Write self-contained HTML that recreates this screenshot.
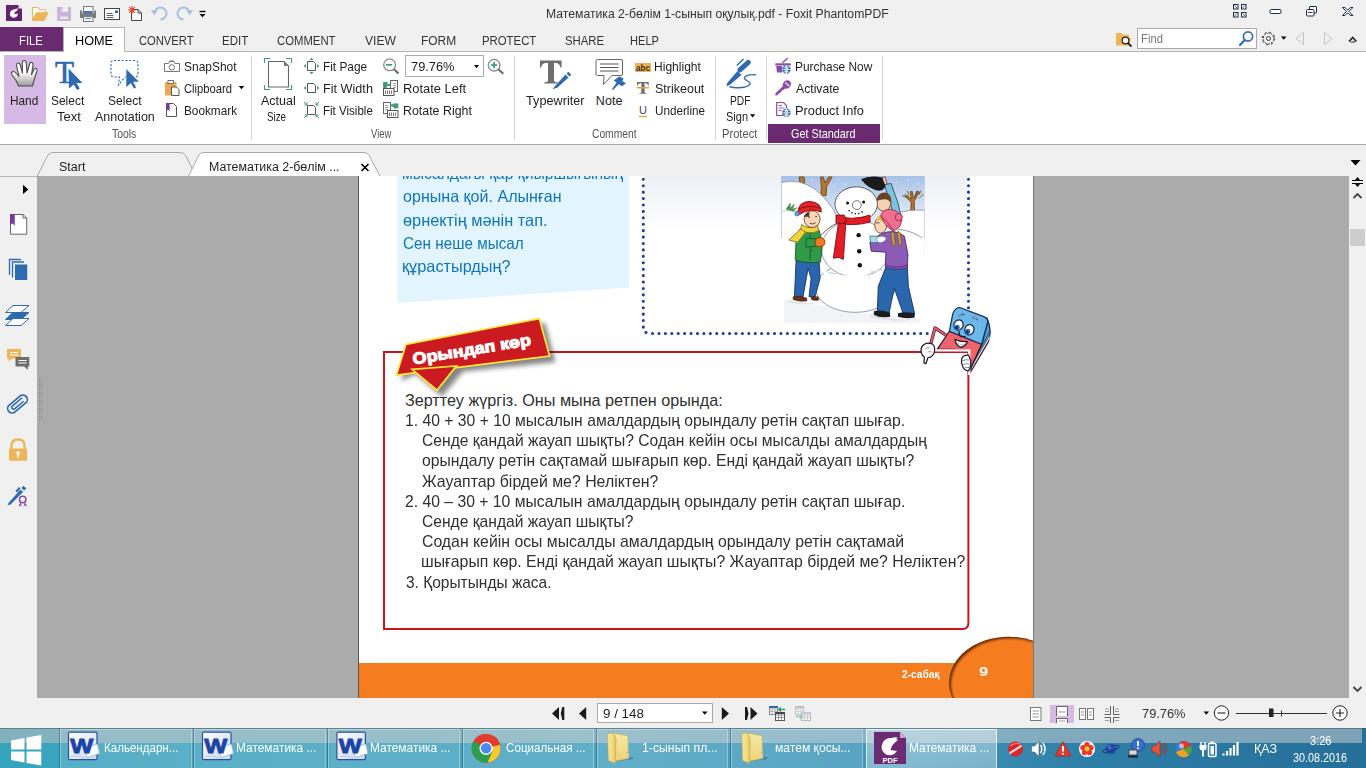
<!DOCTYPE html>
<html lang="kk"><head><meta charset="utf-8"><title>Foxit PhantomPDF</title>
<style>
html,body{margin:0;padding:0;}
body{width:1366px;height:768px;overflow:hidden;position:relative;background:#f0f0f0;font-family:"Liberation Sans",sans-serif;}
.a{position:absolute;}
.t{position:absolute;white-space:pre;line-height:1;transform-origin:0 0;font-family:"Liberation Sans",sans-serif;}
svg{position:absolute;overflow:visible;}
.sep{position:absolute;width:1px;background:#d4d4d4;top:56px;height:84px;}
</style></head><body>
<!-- title + tab bar backgrounds -->
<div class="a" style="left:0;top:0;width:1366px;height:52px;background:#f0f0f0"></div>
<div class="a" style="left:0;top:27px;width:63px;height:24px;background:#6a2a70"></div>
<div class="a" style="left:0;top:51px;width:1366px;height:1px;background:#b4b4b4"></div>
<div class="a" style="left:63px;top:27px;width:62px;height:25px;background:#fff;border:1px solid #b4b4b4;border-bottom:none;box-sizing:border-box"></div>
<!-- ribbon body -->
<div class="a" style="left:0;top:52px;width:1366px;height:92px;background:#fff"></div>
<div class="a" style="left:0;top:144px;width:1366px;height:1px;background:#ababab"></div>
<div class="a" style="left:4px;top:55px;width:42px;height:69px;background:#d6b9e4"></div>
<div class="sep" style="left:251px"></div><div class="sep" style="left:514px"></div><div class="sep" style="left:715px"></div><div class="sep" style="left:766px"></div><div class="sep" style="left:882px"></div>
<div class="a" style="left:768px;top:124px;width:112px;height:19px;background:#6a2a70"></div>
<div class="a" style="left:405px;top:55px;width:79px;height:22px;background:#fff;border:1px solid #ababab;box-sizing:border-box"></div>
<div class="a" style="left:1137px;top:28px;width:120px;height:21px;background:#fff;border:1px solid #ababab;box-sizing:border-box"></div>
<svg style="left:0;top:0" width="1366" height="52" viewBox="0 0 1366 52">
 <!-- foxit logo -->
 <path d="M6 5 H18.500 L22 8.500 V21 H6 Z" fill="#66226c"/><path d="M18.500 5 L22 8.500 H18.500 Z" fill="#f0f0f0"/>
 <path d="M18 9.800 Q13.500 8 10.800 11 Q8.600 14.500 11.300 17 Q14.800 19 17.300 16 Q18 14.800 17.800 13.600 L14 14.200 Q14.600 11.800 18 9.800 Z" fill="#fff"/><path d="M14.500 9.300 q2.500 -1.300 4 -0.600 q-1.800 0.600 -2.300 1.800 z" fill="#fff"/>
 <!-- open folder -->
 <path d="M32.500 20.500 V7.500 H38 L39.500 9.800 H45.500 V13.200" fill="#fff" stroke="#eeb45a" stroke-width="1.100"/>
 <path d="M32.500 20.500 L36.300 12.800 H48 L44.300 20.500 Z" fill="#eeb45a" stroke="#eeb45a" stroke-width="1"/>
 <!-- save (disabled, light purple) -->
 <rect x="57.100" y="7" width="13.900" height="13.900" fill="#cbb3d8"/>
 <rect x="61" y="7" width="7.100" height="4.800" fill="#f0f0f0"/><rect x="61.400" y="7" width="1.400" height="3.400" fill="#cbb3d8"/><rect x="60.200" y="16.700" width="7.900" height="2.200" fill="#f0f0f0"/>
 <!-- print -->
 <rect x="83.500" y="6.500" width="9.500" height="7" fill="#fff" stroke="#7b7b7b" stroke-width="1"/>
 <rect x="84" y="11" width="8.500" height="2.200" fill="#3b78c4"/>
 <path d="M80 10.400 H82.200 V13.200 H94.200 V10.400 H96 V18 H80 Z" fill="#7b7b7b"/>
 <rect x="83.500" y="16.700" width="9.500" height="4.800" fill="#fff" stroke="#7b7b7b" stroke-width="1"/>
 <path d="M85.300 18.600 h5.700" stroke="#3b78c4" stroke-width="0.900"/>
 <!-- email -->
 <rect x="104.500" y="8.500" width="15" height="11" fill="#fff" stroke="#444" stroke-width="1"/>
 <path d="M106.500 13.500 h6 M106.500 15.500 h7 M106.500 17.500 h7" stroke="#666" stroke-width="1"/><rect x="115" y="10.500" width="3" height="2.500" fill="#2a62b0"/>
 <!-- new doc w/ star -->
 <path d="M131.500 9.500 H138 L141.500 13 V20.500 H131.500 Z" fill="#fff" stroke="#444" stroke-width="1"/><path d="M138 9.500 V13 H141.500" fill="none" stroke="#444" stroke-width="1"/>
 <path d="M132 6 v8 M128 10 h8 M129.200 7.200 l5.600 5.600 M134.800 7.200 l-5.600 5.600" stroke="#e0452a" stroke-width="1.200"/>
 <!-- undo / redo -->
 <path d="M154.500 12.500 A6 6 0 1 1 160.500 19.500" fill="none" stroke="#a8c0e2" stroke-width="2"/><path d="M151 10.300 h6.800 l-3.600 5 z" fill="#a8c0e2"/>
 <path d="M189.500 12.500 A6 6 0 1 0 183.500 19.500" fill="none" stroke="#a8c0e2" stroke-width="2"/><path d="M186.200 10.300 h6.800 l-3.200 5 z" fill="#a8c0e2"/>
 <!-- qat dropdown -->
 <path d="M199.500 11.500 h6" stroke="#000" stroke-width="1.400"/><path d="M199.500 14 h6 l-3 3.300 z" fill="#000"/>
 <!-- window controls -->
 <g stroke="#1e2a4a" stroke-width="1" fill="#fff">
  <rect x="1233.500" y="4.500" width="4.500" height="4.500"/><rect x="1241.500" y="4.500" width="4.500" height="4.500"/><rect x="1233.500" y="12.500" width="4.500" height="4.500"/><rect x="1241.500" y="12.500" width="4.500" height="4.500"/>
  <path d="M1234.500 5.500 l2.500 2.500 M1245 5.500 l-2.500 2.500 M1234.500 16 l2.500 -2.500 M1245 16 l-2.500 -2.500" stroke-width="0.800" fill="none"/>
  <rect x="1270" y="9.500" width="11" height="4" rx="1.200"/>
  <path d="M1309.500 9.500 V7 Q1309.500 6.500 1310 6.500 H1316 Q1316.500 6.500 1316.500 7 V12.500 Q1316.500 13 1316 13 H1314"/><rect x="1306.500" y="9.500" width="7.500" height="6.500" rx="1"/><path d="M1308 12.500 h4.500" stroke-width="0.900" fill="none"/>
  <path d="M1342.500 7.500 h2.500 l2.700 2.700 l2.700 -2.700 h2.500 l-3.900 4 l3.900 4 h-2.500 l-2.700 -2.700 l-2.700 2.700 h-2.500 l3.900 -4 z"/>
 </g>
 <!-- find row -->
 <path d="M1116 45.500 V33 H1121.500 L1123 34.800 H1129 V38" fill="#f1b555"/><path d="M1116 45.500 L1118 38 H1131 L1129 45.500 Z" fill="#f1b555"/>
 <circle cx="1125.500" cy="40.500" r="3.400" fill="#fff" stroke="#222" stroke-width="1.300"/><path d="M1128 43 l3.500 3.500" stroke="#222" stroke-width="1.800"/>
 <circle cx="1248" cy="36.500" r="4.600" fill="#fff" stroke="#2e6cc0" stroke-width="1.700"/><path d="M1244.800 40 l-4.800 5" stroke="#2e6cc0" stroke-width="2.200" stroke-linecap="round"/>
 <g stroke="#333" fill="none">
  <circle cx="1268.500" cy="38.500" r="5.300" stroke-width="1" stroke-dasharray="2.100 1.230"/><circle cx="1268.500" cy="38.500" r="6.300" stroke-width="1" stroke-dasharray="2.100 2.850" stroke-dashoffset="0"/><circle cx="1268.500" cy="38.500" r="2" stroke-width="1"/>
 </g>
 <path d="M1281 36.500 h5.500 l-2.750 3.200 z" fill="#000"/>
 <path d="M1303.500 32.500 V44.500 L1296 38.500 Z" fill="none" stroke="#c4c4c4" stroke-width="1"/>
 <path d="M1324.500 32.500 V44.500 L1332 38.500 Z" fill="none" stroke="#c4c4c4" stroke-width="1"/>
 <path d="M1349 41.500 l3.700 -4 l3.700 4" fill="none" stroke="#222" stroke-width="1.600"/><path d="M1350.500 42 h4.500" stroke="#222" stroke-width="1"/>
</svg>

<svg style="left:0;top:52px" width="1366" height="92" viewBox="0 52 1366 92">
<defs>
 <linearGradient id="ghand" x1="0" y1="0" x2="0" y2="1"><stop offset="0.45" stop-color="#fff"/><stop offset="1" stop-color="#9a9a9a"/></linearGradient>
</defs>
<!-- hand -->
<path d="M18.500 86 Q17 81 13.500 77 Q10.500 73.500 12 72 Q14 70.500 17 74 L19 76.500 L16.500 65.500 Q16.300 63.300 18 63 Q19.700 62.800 20.300 65 L22.500 73 L22.300 62.500 Q22.500 60.500 24.200 60.500 Q26 60.500 26.200 62.500 L27 73 L29.500 64 Q30.200 62 31.800 62.500 Q33.300 63 33 65.200 L31.500 74.500 L34 69.500 Q35 67.800 36.300 68.500 Q37.500 69.200 36.800 71.500 Q34.500 78 32.500 86 Z" fill="url(#ghand)" stroke="#4a4a4a" stroke-width="1.100" stroke-linejoin="round"/>
<!-- select text -->
<text x="55" y="83" font-family="Liberation Serif, serif" font-size="31" fill="#2d6ab0" stroke="#2d6ab0" stroke-width="0.600" textLength="19" lengthAdjust="spacingAndGlyphs">T</text>
<path d="M68.500 68.500 L82.500 83 L76.500 83 L79.800 88.500 L77 90 L73.800 84.500 L69 88.500 Z" fill="#2d6ab0"/>
<!-- select annotation -->
<path d="M114 60.500 H135 Q138 60.500 138 63.500 V74 Q138 77 135 77 H125 L118.500 85 L119.500 77 H114 Q111 77 111 74 V63.500 Q111 60.500 114 60.500 Z" fill="none" stroke="#2d6ab0" stroke-width="1.100" stroke-dasharray="2.200 1.600"/>
<path d="M126 68.500 L139.500 82 L133.500 82 L136.500 87.500 L133.800 89 L130.800 83.500 L126 87.500 Z" fill="#2d6ab0" stroke="#fff" stroke-width="0.600"/>
<!-- camera -->
<path d="M164.500 63.500 H168.500 L169.500 61.500 H174 L175 63.500 H179.500 V71.500 H164.500 Z" fill="#fff" stroke="#777" stroke-width="1"/><rect x="169.500" y="60.500" width="4.500" height="1.500" fill="#777"/>
<circle cx="171.800" cy="67.300" r="2.700" fill="#fff" stroke="#777" stroke-width="1"/>
<!-- clipboard -->
<path d="M165 82 H176.500 V88 H171.500 V95.500 H165 Z" fill="#eaa94e"/>
<rect x="168" y="80.500" width="5.500" height="3" fill="#fff" stroke="#666" stroke-width="0.900"/>
<path d="M171.500 87 H176.500 L179 89.500 V95.500 H171.500 Z" fill="#fff" stroke="#555" stroke-width="1"/>
<path d="M238.700 86 h5.600 l-2.800 3.300 z" fill="#000"/>
<!-- bookmark -->
<path d="M166.500 103.500 H173.500 L176.500 106.500 V116.500 H166.500 Z" fill="#fff" stroke="#555" stroke-width="1"/>
<path d="M166.200 103 H169.600 V111.300 L167.900 109.500 L166.200 111.300 Z" fill="#7a3a9a"/>
<!-- actual size -->
<g stroke="#3d9a7a" stroke-width="1.100" fill="none"><path d="M264.500 63 V58.500 H270 M286 58.500 H291.500 V63 M291.500 85 V89.500 H286 M270 89.500 H264.500 V85"/></g>
<path d="M268.500 61.500 H284 L288.500 66 V87 H268.500 Z" fill="#fff" stroke="#666" stroke-width="1.100"/><path d="M284 61.500 V66 H288.500 Z" fill="#777"/>
<!-- fit page -->
<g>
 <path d="M307.500 61.500 H313.500 L315.500 63.500 V70.500 H307.500 Z" fill="#fff" stroke="#555" stroke-width="1"/>
 <path d="M309.500 60 l2 -2.200 l2 2.200 z M309.500 72 l2 2.200 l2 -2.200 z M306 64 l-2.200 2 l2.200 2 z M317 64 l2.200 2 l-2.200 2 z" fill="#3d9a7a"/>
 <path d="M307.500 83.500 H313.500 L315.500 85.500 V92.500 H307.500 Z" fill="#fff" stroke="#555" stroke-width="1"/>
 <path d="M306 86 l-2.200 2 l2.200 2 z M317 86 l2.200 2 l-2.200 2 z" fill="#3d9a7a"/>
 <path d="M307.500 105.500 H313.500 L315.500 107.500 V114.500 H307.500 Z" fill="#fff" stroke="#555" stroke-width="1"/>
 <path d="M304 102 l3 3 M319 102 l-3 3 M304 118 l3 -3 M319 118 l-3 -3" stroke="#3d9a7a" stroke-width="1"/>
 <path d="M307 105 h-2.500 M307 105 v-2.500 M316 105 h2.500 M316 105 v-2.500 M307 115 h-2.500 M307 115 v2.500 M316 115 h2.500 M316 115 v2.500" stroke="#3d9a7a" stroke-width="1"/>
</g>
<!-- zoom out / in -->
<circle cx="389.600" cy="64.800" r="5.900" fill="#fff" stroke="#8a8a8a" stroke-width="1.300"/><path d="M394 69.300 l4.500 4.300" stroke="#6a6a6a" stroke-width="2.100"/><path d="M386 64.800 h6.200" stroke="#3d9a7a" stroke-width="1.700"/>
<circle cx="494.100" cy="65.200" r="5.800" fill="#fff" stroke="#8a8a8a" stroke-width="1.300"/><path d="M498.500 69.500 l4.800 4.300" stroke="#6a6a6a" stroke-width="2.100"/><path d="M491 65.200 h6.200 M494.100 62.100 v6.200" stroke="#3d9a7a" stroke-width="1.700"/>
<path d="M474 65 h5 l-2.500 3.300 z" fill="#000"/>
<!-- rotate left / right -->
<g>
 <rect x="390.500" y="80.500" width="7" height="11" fill="#fff" stroke="#666" stroke-width="1"/><path d="M393 83.500 h3 M393 85.500 h3 M393 87.500 h3" stroke="#888" stroke-width="0.800"/>
 <rect x="383.500" y="88.500" width="10.500" height="7" fill="#fff" stroke="#555" stroke-width="1"/><path d="M385.500 90.500 v3.500 M387.500 90.500 v3.500 M389.500 90.500 v3.500 M391.500 90.500 v3.500" stroke="#666" stroke-width="0.900"/>
 <path d="M383.300 82 h3.500 v2 q3.500 -1.500 4.500 3.500 q-2 -2.500 -4.500 -1.500 v2 h-3.500 z" fill="#3d9a7a"/><path d="M383.300 82 h5 l-5 5.500 z" fill="#3d9a7a"/>
 <rect x="383.500" y="102.500" width="7" height="11" fill="#fff" stroke="#666" stroke-width="1"/><path d="M385 105.500 h3 M385 107.500 h3 M385 109.500 h3" stroke="#888" stroke-width="0.800"/>
 <rect x="387.500" y="110.500" width="10.500" height="7" fill="#fff" stroke="#555" stroke-width="1"/><path d="M389.500 112.500 v3.500 M391.500 112.500 v3.500 M393.500 112.500 v3.500 M395.500 112.500 v3.500" stroke="#666" stroke-width="0.900"/>
 <path d="M389.500 106 q2 -3 5 -1.500 v-1.500 l4 3.500 l-4 3 v-1.800 q-2.500 -1.700 -5 -1.700 z" fill="#3d9a7a"/><path d="M393.300 103.500 h5 v5.500 z" fill="#3d9a7a"/>
</g>
<!-- typewriter -->
<path d="M540 60.500 H561.600 V67.500 H560.400 Q559.800 63 555.500 63 H554 V80.500 Q554 82.300 557.500 82.300 V83.500 H544.400 V82.300 Q548 82.300 548 80.500 V63 H546.200 Q541.800 63 541.200 67.500 H540 Z" fill="#6e6e6e"/>
<path d="M555.500 85.500 L565.500 74.500 L568.500 77.500 L557.500 87.500 L552.500 89.300 Z" fill="#2d6ab0"/><path d="M566.500 73.500 l1.800 -1.800 l3 3 l-1.800 1.800 z" fill="#2d6ab0"/>
<!-- note -->
<path d="M597.500 59.500 H621 Q622.500 59.500 622.500 61 V74 Q622.500 75.500 621 75.500 H612 L603.500 84.500 L604 75.500 H597.500 Q596 75.500 596 74 V61 Q596 59.500 597.500 59.500 Z" fill="#fff" stroke="#666" stroke-width="1"/>
<path d="M600 64 h18.500 M600 67.500 h18.500 M600 71 h18.500" stroke="#555" stroke-width="1"/>
<path d="M619.300 76.400 L623.600 78.600 L622.300 81 L626 83.300 L622 86.200 L618.700 84.300 L613.300 89.800 L611.800 89.600 L616.600 82.600 L613.600 80.400 Z" fill="#2d6ab0"/>
<!-- highlight / strikeout / underline -->
<rect x="635" y="63" width="16" height="9" fill="#f0b44c"/>
<text x="636" y="70.500" font-family="Liberation Sans, sans-serif" font-weight="700" font-size="9.500" fill="#333" textLength="14" lengthAdjust="spacingAndGlyphs">abc</text>
<path transform="translate(637 82) scale(0.542 0.509) translate(-540 -60.500)" d="M540 60.500 H561.600 V67.500 H560.400 Q559.800 63 555.500 63 H554 V80.500 Q554 82.300 557.500 82.300 V83.500 H544.400 V82.300 Q548 82.300 548 80.500 V63 H546.200 Q541.800 63 541.200 67.500 H540 Z" fill="#6e6e6e"/><path d="M636.500 87.700 h12.500" stroke="#e8a23c" stroke-width="1.500"/>
<text x="639" y="113.500" font-family="Liberation Sans, sans-serif" font-size="11" fill="#444">U</text><path d="M639 116.500 h8" stroke="#e8a23c" stroke-width="1.400"/>
<!-- pdf sign -->
<path d="M739.900 69.900 L748.300 62.400" stroke="#2d6ab0" stroke-width="5" stroke-linecap="round" fill="none"/>
<path d="M737.500 71 L741.500 75 L730 84.700 L726.400 86.200 L727.200 83 Z" fill="#2d6ab0"/>
<path d="M736.800 65.500 L743.500 58.900" stroke="#2d6ab0" stroke-width="1.400" fill="none"/>
<path d="M755.800 74.800 C748 74 744 76.500 744.500 78.500 C745.500 81 751 81.500 750 84 C748 88 736 88.500 729.500 86.800" fill="none" stroke="#2d6ab0" stroke-width="1.400"/>
<path d="M750 114.300 h5.200 l-2.600 3.100 z" fill="#000"/>
<!-- purchase / activate / product info -->
<g>
 <path d="M775.300 63.300 H790.800 V65.500 H775.300 Z" fill="#8a4aa8"/><path d="M776.200 66 H782 V72.600 H777 Z" fill="#8a4aa8"/>
 <path d="M782.400 62.800 L787.700 58" stroke="#8a4aa8" stroke-width="1.400"/>
 <circle cx="786.400" cy="69.500" r="4.300" fill="#2d6ab0"/><path d="M782.100 69.500 h8.600 M786.400 65.200 v8.600 M783.300 66.800 q3.100 1.400 6.200 0 M783.300 72.200 q3.100 -1.400 6.200 0 M786.400 65.200 q-3 4.300 0 8.600 M786.400 65.200 q3 4.300 0 8.600" stroke="#fff" stroke-width="0.700" fill="none"/>
 <path d="M775.300 95.500 L775.500 93.200 L782.800 86.300 Q782.300 83.500 784.500 81.300 Q787.500 79.200 790 81.300 Q792 83.800 790 86.800 Q788 89.300 785 88.600 L783.600 90 L782.400 89.800 L782 91.600 L780.600 91.600 L780.300 93.200 L778.800 93.200 L777.500 95.300 Z" fill="#8a4aa8"/><path d="M785.300 82.500 l4 3.600" stroke="#fff" stroke-width="1.200"/>
 <path d="M776.700 102.500 H783.500 L786.500 105.500 V115.500 H776.700 Z" fill="#fff" stroke="#8a4aa8" stroke-width="1.200"/><path d="M778.700 105.500 h3.500 M778.700 108 h5 M778.700 110.500 h3" stroke="#8a4aa8" stroke-width="0.900"/>
 <circle cx="786.400" cy="112.800" r="4.300" fill="#2d6ab0"/><path d="M782.100 112.800 h8.600 M786.400 108.500 v8.600 M783.300 110.100 q3.100 1.400 6.200 0 M783.300 115.500 q3.100 -1.400 6.200 0 M786.400 108.500 q-3 4.300 0 8.600 M786.400 108.500 q3 4.300 0 8.600" stroke="#fff" stroke-width="0.700" fill="none"/>
</g>
</svg>

<!-- doc tab strip -->
<svg style="left:0;top:145px" width="1366" height="32" viewBox="0 145 1366 32">
 <path d="M37 176.5 L48 155 Q50 152.5 53 152.5 L180 152.5 Q184 152.5 186 156 L193 170" fill="#f0f0f0" stroke="#a8a8a8" stroke-width="1"/>
 <path d="M188 177 L199 155 Q200.500 152.500 203.500 152.500 L364 152.500 Q367.500 152.500 369 155.500 L380.500 177 Z" fill="#fff" stroke="#a8a8a8" stroke-width="1"/>
 <path d="M361.500 164 l7 7 m0 -7 l-7 7" stroke="#000" stroke-width="1.6" fill="none"/>
 <path d="M1350.5 160 h10 l-5 5.5 z" fill="#000"/>
</svg>
<!-- document viewport -->
<div class="a" style="left:37px;top:176px;width:1312px;height:522px;background:#ababab"></div>
<div class="a" style="left:0;top:176px;width:37px;height:1px;background:#b8b8b8"></div>
<div class="a" style="left:0;top:176px;width:1366px;height:522px;overflow:hidden"><div class="a" style="left:0;top:-176px;width:1366px;height:768px">
<div class="a" style="left:358px;top:170px;width:676px;height:540px;background:#fff;border-left:1px solid #555;border-right:1px solid #777;box-sizing:border-box"></div>
<svg style="left:0;top:0" width="1366" height="768" viewBox="0 0 1366 768">
<defs>
 <linearGradient id="gsky" x1="0" y1="0" x2="0" y2="1"><stop offset="0" stop-color="#a4c0e6"/><stop offset="0.6" stop-color="#dfe9f7"/><stop offset="1" stop-color="#f4f7fc"/></linearGradient>
 <linearGradient id="gbox" x1="0" y1="0" x2="0" y2="1"><stop offset="0" stop-color="#eceef5"/><stop offset="1" stop-color="#ffffff"/></linearGradient>
 <radialGradient id="gor" cx="0.62" cy="0.55" r="0.75"><stop offset="0.75" stop-color="#f57d20"/><stop offset="1" stop-color="#c25e14"/></radialGradient>
 <filter id="sh" x="-20%" y="-20%" width="150%" height="160%"><feGaussianBlur stdDeviation="2.600"/></filter>
 <filter id="sh1" x="-20%" y="-20%" width="150%" height="160%"><feGaussianBlur stdDeviation="1.2"/></filter>
 <clipPath id="corc"><ellipse cx="1008.600" cy="683" rx="59.600" ry="46.300"/></clipPath>
 <clipPath id="cpic"><rect x="781" y="170" width="143.800" height="153.400"/></clipPath>
</defs>
<!-- light blue box -->
<path d="M397.300 170 H629.300 V287.600 L397.300 303 Z" fill="#e2f4fd"/>
<!-- dotted frame w/ gradient -->
<rect x="645" y="170" width="322" height="60" fill="url(#gbox)"/>
<path d="M643.300 172.880 V326.500 Q643.300 333.500 650.300 333.500 H807" fill="none" stroke="#1f3f97" stroke-width="3.100" stroke-linecap="round" stroke-dasharray="0.010 6.410"/><path d="M968.500 172.880 V326.500 Q968.500 333.500 961.500 333.500 H810" fill="none" stroke="#1f3f97" stroke-width="3.100" stroke-linecap="round" stroke-dasharray="0.010 6.410"/>
<!-- picture -->
<g clip-path="url(#cpic)"><g transform="translate(776 174) scale(0.20052)">
 <rect x="25" y="0" width="718" height="745" fill="#fff"/>
 <rect x="25" y="0" width="718" height="330" fill="url(#gsky)"/>
 <!-- trees -->
 <path d="M115 15 h25 l3 32 h-22 z" fill="#b5772d" stroke="#6a4418" stroke-width="4.500"/>
 <path d="M222 15 l14 0 l8 30 l18 -30 l18 0 l-28 48 l-2 45 h-26 l2 -50 z" fill="#b5772d" stroke="#6a4418" stroke-width="4.500"/>
 <path d="M672 188 l2 -48 l-30 -28 l8 -6 l22 20 l-4 -38 l9 -1 l6 34 l22 -36 l8 5 l-26 46 l2 52 z" fill="#b5772d" stroke="#6a4418" stroke-width="4.500"/>
 <path d="M640 100 l14 14 M700 84 l-4 26 M735 100 l-22 22 M655 84 l8 22 M722 84 l-8 20 M628 108 l18 6" stroke="#6a4418" stroke-width="4" fill="none"/>
 <!-- snow dots -->
 <g fill="#fff"><circle cx="180" cy="30" r="3"/><circle cx="310" cy="25" r="3"/><circle cx="345" cy="50" r="3"/><circle cx="600" cy="40" r="3"/><circle cx="660" cy="30" r="3"/><circle cx="710" cy="50" r="3"/><circle cx="630" cy="70" r="3"/><circle cx="290" cy="60" r="3"/></g>
 <!-- hills -->
 <path d="M25 42 Q120 20 200 80 Q260 130 300 200 L300 330 L25 330 Z" fill="#fff" stroke="#8a93a6" stroke-width="4.500"/>
 <path d="M25 190 Q60 175 110 185" fill="none" stroke="#c5cad6" stroke-width="4.500"/>
 <path d="M590 200 Q660 175 743 180 L743 340 L590 340 Z" fill="#fff" stroke="#8a93a6" stroke-width="4.500"/>
 <path d="M610 275 Q690 285 743 330 L743 400 L610 400 Z" fill="#fff" stroke="#8a93a6" stroke-width="4.500"/>
 <rect x="25" y="320" width="718" height="430" fill="#fff"/>
 <!-- ground shadow -->
 <path d="M40 625 Q120 645 230 655 Q400 705 520 695 Q640 725 720 720 L720 745 L40 745 Z" fill="#f3f4f7"/><path d="M60 630 Q130 650 215 640 Q150 660 60 640 Z M470 700 Q580 735 715 722 Q600 745 470 715 Z" fill="#dfe1e8"/>
 
 <!-- grass -->
 <path d="M50 175 l22 -30 l-2 26 l22 -22 l-10 28 l22 -10 l-18 20 z" fill="#4f9a48" stroke="#2a5a28" stroke-width="2"/>
 <!-- boy behind -->
 <path d="M540 52 l34 -4 l34 95 l20 90 l-34 10 l-22 -90 z" fill="#7ec3de" stroke="#2a4a60" stroke-width="4.500"/>
 <path d="M528 18 l16 -4 l10 36 l-20 6 z" fill="#f6d2b4" stroke="#6b4a32" stroke-width="4.500"/>
 <ellipse cx="537" cy="142" rx="36" ry="44" fill="#f6d2b4" stroke="#6b4a32" stroke-width="4.500"/>
 <path d="M502 135 Q505 90 545 92 Q580 98 575 150 Q560 110 502 135 Z" fill="#6b4226"/>
 <path d="M424 26 Q470 5 530 18 L546 58 Q540 80 516 84 Q460 76 424 26 Z" fill="#1a1a1a"/>
 <!-- snowman -->
 <ellipse cx="395" cy="568" rx="198" ry="122" fill="#fff" stroke="#8a93a6" stroke-width="4.500"/>
 <ellipse cx="398" cy="372" rx="172" ry="142" fill="#fff" stroke="#8a93a6" stroke-width="4.500"/>
 <path d="M240 480 Q300 520 380 500 Q470 520 550 470 Q560 520 520 560 Q400 600 270 560 Q230 520 240 480 Z" fill="#fff"/>
 <path d="M260 490 q30 10 55 5 M470 490 q30 -2 50 -14" stroke="#d5d9e2" stroke-width="8" fill="none"/>
 <ellipse cx="400" cy="150" rx="106" ry="86" fill="#fff" stroke="#4a4a55" stroke-width="4.500"/>
 <circle cx="403" cy="155" r="22" fill="#fff" stroke="#555" stroke-width="4"/>
 <circle cx="357" cy="145" r="7.500" fill="#111"/><circle cx="437" cy="140" r="7.500" fill="#111"/>
 <g fill="#111"><circle cx="365" cy="183" r="4"/><circle cx="379" cy="193" r="4"/><circle cx="396" cy="198" r="4"/><circle cx="413" cy="197" r="4"/><circle cx="429" cy="189" r="4"/></g>
 <circle cx="412" cy="305" r="11" fill="#111"/><circle cx="415" cy="385" r="11" fill="#111"/><circle cx="418" cy="455" r="11" fill="#111"/>
 <!-- scarf -->
 <path d="M300 208 Q380 235 468 205 L470 240 Q385 262 318 246 Z" fill="#e21d26" stroke="#7e0e14" stroke-width="4.500"/>
 <path d="M312 238 l36 10 l-12 178 l-22 -10 l-28 4 Z" fill="#e21d26" stroke="#7e0e14" stroke-width="4.500"/>
 <path d="M300 205 l40 0 l14 30 l-30 14 l-24 -6 z" fill="#e21d26" stroke="#7e0e14" stroke-width="4.500"/>
 <!-- arm stick -->
 <path d="M225 305 Q270 260 305 245" fill="none" stroke="#333" stroke-width="4"/>
 <!-- boy left -->
 <path d="M100 435 H215 L220 520 L195 612 H165 L175 520 L160 470 L135 612 H92 Z" fill="#2a66ad" stroke="#16335c" stroke-width="4.500"/>
 <path d="M85 612 q35 -8 68 6 l2 14 q-40 8 -70 -6 z M176 612 h34 l4 16 q-20 6 -38 -2 z" fill="#6a3018" stroke="#2a1408" stroke-width="2"/>
 <path d="M120 275 Q170 255 215 280 L232 350 L222 438 Q160 450 96 430 L100 330 Z" fill="#2f9a48" stroke="#17572a" stroke-width="4.500"/>
 <path d="M170 290 v140" stroke="#17572a" stroke-width="4.500"/><circle cx="180" cy="330" r="4" fill="#17572a"/><circle cx="180" cy="380" r="4" fill="#17572a"/>
 <path d="M150 320 L215 325 L215 360 L150 365 Z" fill="#2f9a48" stroke="#17572a" stroke-width="4.500"/>
 <path d="M200 322 q30 -12 42 8 q6 22 -10 30 q-22 8 -38 -4 z" fill="#f47b20" stroke="#8a3a08" stroke-width="4.500"/>
 <path d="M128 252 Q165 280 208 256 l4 28 Q165 305 122 280 Z" fill="#f2d53c" stroke="#8a7418" stroke-width="4.500"/>
 <path d="M122 275 l26 14 l-40 52 l-44 -12 z" fill="#f2d53c" stroke="#8a7418" stroke-width="4.500"/>
 <ellipse cx="180" cy="225" rx="40" ry="42" fill="#f8d6b8" stroke="#6b4a32" stroke-width="4.500"/>
 <path d="M138 215 q10 -20 30 -25 l-4 22 z" fill="#5a3218"/>
 <path d="M108 195 Q112 135 170 137 Q228 142 226 190 Q170 165 112 205 Z" fill="#e3232a" stroke="#7e0e14" stroke-width="4.500"/>
 <path d="M112 175 Q165 150 225 172" fill="none" stroke="#7e0e14" stroke-width="4.500"/>
 <circle cx="105" cy="198" r="12" fill="#5aa0d8" stroke="#1f4a80" stroke-width="2"/>
 <circle cx="165" cy="215" r="4" fill="#222"/><circle cx="200" cy="212" r="4" fill="#222"/><path d="M168 245 q16 10 30 -2" stroke="#6b2a18" stroke-width="4.500" fill="none"/>
 <!-- girl -->
 <path d="M548 465 H655 L660 560 L692 700 L640 712 L590 570 L575 640 L560 712 L505 700 L510 560 Z" fill="#2a66ad" stroke="#16335c" stroke-width="4.500"/>
 <path d="M488 684 q40 -8 80 8 l2 20 q-50 8 -82 -10 z M608 694 q40 -10 82 0 l2 22 q-46 8 -84 -4 z" fill="#1c1c1c"/>
 <path d="M520 300 Q590 270 640 310 L658 400 L655 468 Q600 485 545 465 L548 390 L475 385 L468 340 Z" fill="#8b5bb5" stroke="#4a2a70" stroke-width="4.500"/>
 <path d="M548 455 Q600 475 655 455" stroke="#4a2a70" stroke-width="4.500" fill="none"/>
 <path d="M468 310 h50 l-4 32 h-42 z" fill="#a8dcea" stroke="#3a7a90" stroke-width="4.500"/>
 <path d="M500 320 q30 -20 50 0 q-8 24 -40 22 z" fill="#fff" stroke="#555" stroke-width="2"/>
 <ellipse cx="522" cy="255" rx="30" ry="40" fill="#f8d6b8" stroke="#6b4a32" stroke-width="4.500"/>
 <path d="M500 225 q15 -30 45 -25 l-10 40 z" fill="#e0c050"/>
 <path d="M572 292 q10 -5 17 2 l6 60 l-13 6 z M604 290 q9 -4 16 3 l7 58 l-13 5 z" fill="#c9a040" stroke="#6a4a14" stroke-width="3"/>
 <path d="M522 210 Q530 170 580 178 Q630 190 625 240 Q618 278 580 282 Q545 262 522 210 Z" fill="#ef6f8e" stroke="#9a2a48" stroke-width="4.500"/>
 <path d="M524 212 Q560 240 585 282" stroke="#9a2a48" stroke-width="4.500" fill="none"/>
 <circle cx="612" cy="215" r="18" fill="#ef6f8e" stroke="#9a2a48" stroke-width="4.500"/>
 <path d="M500 245 q8 -6 16 0" stroke="#4a2a18" stroke-width="4.500" fill="none"/>
</g></g>
<!-- red box -->
<path d="M384 352 H968.400 V623 Q968.400 629 962.400 629 H384 Z" fill="none" stroke="#c8141c" stroke-width="2"/>
<!-- eraser mascot -->
<rect x="937.500" y="330" width="26" height="7" fill="#fff"/>
<g transform="translate(915 300) scale(0.104167)">
 <!-- side stripes -->
 <path d="M690 172 Q718 230 722 300 Q722 360 700 410 L528 700 L518 688 L640 425 L700 200 Z" fill="#4a9ad8" stroke="#1b2a4a" stroke-width="12" stroke-linejoin="round"/>
 <path d="M712 380 L528 700 L518 688 L655 440 Z" fill="#e8505a"/>
 <path d="M716 340 L540 640 L548 655 L718 365 Z" fill="#f6ecd0"/>
 <path d="M720 300 L560 585 M716 340 L545 635 M712 385 L530 695" stroke="#1b2a4a" stroke-width="6" fill="none"/>
 <!-- pink lower -->
 <path d="M330 300 L640 425 L560 600 L520 690 L520 478 L215 472 Z" fill="#f0636d" stroke="#1b1b2a" stroke-width="12" stroke-linejoin="round"/>
 <!-- blue face -->
 <path d="M330 300 L362 135 Q380 75 430 72 L672 165 Q700 180 698 210 L640 425 Z" fill="#6bb9ea" stroke="#1b2a4a" stroke-width="12" stroke-linejoin="round"/>
 <!-- eyebrows -->
 <path d="M418 150 Q440 118 475 140 Q445 135 425 158 Z" fill="#fff" stroke="#1b2a4a" stroke-width="6"/>
 <path d="M556 165 Q590 150 602 195 Q585 172 560 178 Z" fill="#fff" stroke="#1b2a4a" stroke-width="6"/>
 <!-- eyes -->
 <ellipse cx="418" cy="240" rx="44" ry="50" fill="#fff" stroke="#1b2a4a" stroke-width="12" transform="rotate(20 418 240)"/>
 <ellipse cx="522" cy="285" rx="44" ry="50" fill="#fff" stroke="#1b2a4a" stroke-width="12" transform="rotate(20 522 285)"/>
 <circle cx="404" cy="262" r="25" fill="#2a6ab8"/><circle cx="399" cy="267" r="13" fill="#0e2a58"/>
 <circle cx="506" cy="302" r="25" fill="#2a6ab8"/><circle cx="501" cy="307" r="13" fill="#0e2a58"/>
 <path d="M422 305 Q418 360 480 350" fill="none" stroke="#16223c" stroke-width="14" stroke-linecap="round"/>
 <!-- mouth -->
 <path d="M383 378 Q440 405 502 398 Q495 440 440 455 Q395 440 383 378 Z" fill="#fff" stroke="#1b1b2a" stroke-width="12" stroke-linejoin="round"/>
 <path d="M398 415 Q440 432 490 425" fill="none" stroke="#444" stroke-width="3"/>
 <!-- left arm -->
 <path d="M300 340 L192 268 L150 425" fill="none" stroke="#1b1b2a" stroke-width="30" stroke-linejoin="round"/>
 <path d="M300 340 L192 268 L150 425" fill="none" stroke="#ea5660" stroke-width="19" stroke-linejoin="round"/>
 <!-- white outline for the box corner -->
 <path d="M180 484 H521 V720" fill="none" stroke="#fff" stroke-width="22"/>
 <!-- hands -->
 <path d="M62 455 Q95 400 155 418 Q195 435 188 485 Q182 530 150 548 L125 552 L104 612 L86 604 L90 548 Q45 515 62 455 Z" fill="#fff" stroke="#1b1b2a" stroke-width="12" stroke-linejoin="round"/>
 <path d="M100 470 q20 -20 40 -10 M120 500 q20 -10 40 0" stroke="#555" stroke-width="6" fill="none"/>
 <path d="M450 560 Q465 525 515 530 L535 580 Q540 640 515 680 Q470 680 455 630 Q440 590 450 560 Z" fill="#fff" stroke="#1b1b2a" stroke-width="12" stroke-linejoin="round"/>
 <path d="M455 585 q30 -20 65 -8 M460 620 q30 -16 62 -4 M475 652 q22 -12 46 -2" stroke="#444" stroke-width="6" fill="none"/>
</g>
<!-- label shadow -->
<path d="M410 349 L545 323 L555.500 362 L463 371.500 L442 396.500 L416 374 L401 381 Z" fill="#000" opacity="0.480" filter="url(#sh)"/>
<!-- label -->
<path d="M406 344.300 L539.300 318.600 L549.600 356 L396.400 375.200 Z" fill="#cb1b20" stroke="#fde83a" stroke-width="1.700" stroke-linejoin="miter"/>
<path d="M412 369.300 L456.500 365.900 L437 390.200 Z" fill="#cb1b20" stroke="#fde83a" stroke-width="1.700"/>
<text x="0" y="0" transform="translate(413.600 364.400) rotate(-9.300)" font-family="Liberation Sans, sans-serif" font-weight="700" font-size="16" fill="#fff" stroke="#fff" stroke-width="1" stroke-linejoin="round" textLength="119.500" lengthAdjust="spacingAndGlyphs">Орындап көр</text>
<!-- orange footer -->
<rect x="359" y="663" width="674" height="40" fill="#f57d20"/>
<ellipse cx="1008.600" cy="683" rx="59.600" ry="46.300" fill="#f57d20"/>
<g clip-path="url(#corc)"><ellipse cx="1010.300" cy="684.600" rx="61.300" ry="48" fill="none" stroke="#4a1a00" stroke-width="4" opacity="0.850" filter="url(#sh1)"/></g>
<rect x="1033" y="600" width="60" height="110" fill="#ababab"/>
<rect x="1033" y="600" width="1" height="110" fill="#777"/>
</svg>

<span class="t" style="left:401.75px;top:165px;font-size:16.5px;color:#0f75bc;transform:scaleX(0.952);">мысалдағы қар қиыршығының</span>
<span class="t" style="left:402.70px;top:188px;font-size:16.5px;color:#0f75bc;transform:scaleX(0.974);">орнына қой. Алынған</span>
<span class="t" style="left:402.70px;top:212px;font-size:16.5px;color:#0f75bc;transform:scaleX(0.990);">өрнектің мәнін тап.</span>
<span class="t" style="left:402.70px;top:235px;font-size:16.5px;color:#0f75bc;transform:scaleX(0.926);">Сен неше мысал</span>
<span class="t" style="left:401.71px;top:258px;font-size:16.5px;color:#0f75bc;transform:scaleX(0.987);">құрастырдың?</span>
<span class="t" style="left:404.90px;top:392px;font-size:16.2px;color:#303030;transform:scaleX(1.000);">Зерттеу жүргіз. Оны мына ретпен орында:</span>
<span class="t" style="left:405.23px;top:412px;font-size:16.2px;color:#303030;transform:scaleX(0.970);">1. 40 + 30 + 10 мысалын амалдардың орындалу ретін сақтап шығар.</span>
<span class="t" style="left:422.10px;top:432px;font-size:16.2px;color:#303030;transform:scaleX(0.967);">Сенде қандай жауап шықты? Содан кейін осы мысалды амалдардың</span>
<span class="t" style="left:421.90px;top:452px;font-size:16.2px;color:#303030;transform:scaleX(0.972);">орындалу ретін сақтамай шығарып көр. Енді қандай жауап шықты?</span>
<span class="t" style="left:422.40px;top:473px;font-size:16.2px;color:#303030;transform:scaleX(0.980);">Жауаптар бірдей ме? Неліктен?</span>
<span class="t" style="left:405.20px;top:493px;font-size:16.2px;color:#303030;transform:scaleX(0.971);">2. 40 – 30 + 10 мысалын амалдардың орындалу ретін сақтап шығар.</span>
<span class="t" style="left:421.90px;top:513px;font-size:16.2px;color:#303030;transform:scaleX(0.965);">Сенде қандай жауап шықты?</span>
<span class="t" style="left:421.90px;top:533px;font-size:16.2px;color:#303030;transform:scaleX(0.977);">Содан кейін осы мысалды амалдардың орындалу ретін сақтамай</span>
<span class="t" style="left:421.22px;top:553px;font-size:16.2px;color:#303030;transform:scaleX(0.977);">шығарып көр. Енді қандай жауап шықты? Жауаптар бірдей ме? Неліктен?</span>
<span class="t" style="left:405.50px;top:574px;font-size:16.2px;color:#303030;transform:scaleX(0.957);">3. Қорытынды жаса.</span>
<span class="t" style="left:901.50px;top:669px;font-size:10.5px;color:#fff;transform:scaleX(0.968);font-weight:700;">2-сабақ</span>
<span class="t" style="left:978.50px;top:665px;font-size:13.5px;color:#fff;transform:scaleX(1.214);font-weight:700;">9</span>
</div></div>
<svg style="left:0;top:177px" width="50" height="340" viewBox="0 177 50 340">
 <path d="M23 184.800 V194 L28.300 189.400 Z" fill="#000"/>
 <!-- bookmark -->
 <path d="M10.500 214.500 H23 L26.700 218 V234.200 H10.500 Z" fill="#fff" stroke="#666" stroke-width="1"/><path d="M23 214.500 V218 H26.700" fill="none" stroke="#666" stroke-width="1"/>
 <path d="M10 214 H14.800 V225.800 L12.400 223.300 L10 225.800 Z" fill="#7a3a9a"/>
 <!-- pages -->
 <path d="M9.500 275 V259.500 H21 M12.500 277.500 V262 H24" fill="none" stroke="#2d6ab0" stroke-width="1.300"/>
 <rect x="15" y="264.500" width="12.200" height="15.500" fill="#2d6ab0"/>
 <!-- layers -->
 <path d="M13 305.500 H29 L21 312.500 H5.500 Z" fill="#fff" stroke="#2d6ab0" stroke-width="1"/>
 <path d="M13 312.500 H29 L21 319.500 H5.500 Z" fill="#2d6ab0" stroke="#2d6ab0" stroke-width="1"/>
 <path d="M13 318.500 H29 L21 325.500 H5.500 Z" fill="#fff" stroke="#2d6ab0" stroke-width="1"/>
 <!-- comments -->
 <path d="M7 349 H21 V358.500 H12 L8.500 361.500 V358.500 H7 Z" fill="#eeb45a"/><path d="M10 352.500 h8 M10 355 h8" stroke="#fff" stroke-width="1"/>
 <path d="M15.500 357 H29.300 V366.500 H27.800 V370 L24.300 366.500 H15.500 Z" fill="#6e6e6e"/><path d="M18.500 360.500 h8 M18.500 363 h8" stroke="#fff" stroke-width="1"/>
 <!-- paperclip -->
 <g transform="rotate(-40 17.500 404)"><rect x="6" y="399.500" width="23" height="9" rx="4.500" fill="none" stroke="#2d6ab0" stroke-width="1.700"/><path d="M25 402.200 H12.500 Q10.500 402.200 10.500 404 Q10.500 405.800 12.500 405.800 H24" fill="none" stroke="#2d6ab0" stroke-width="1.500"/></g>
 <!-- lock -->
 <path d="M11.500 449 V445.500 Q11.500 439.500 18 439.500 Q24.500 439.500 24.500 445.500 V449" fill="none" stroke="#eeb45a" stroke-width="2.400"/>
 <rect x="9" y="448.500" width="18" height="12.200" rx="1" fill="#eeb45a"/><circle cx="18" cy="453" r="1.700" fill="#fff"/><path d="M18 453 v4.500" stroke="#fff" stroke-width="1.500"/>
 <!-- sign -->
 <path d="M8.500 503 L20.500 489.500 L23 492 L10.500 504.500 L7.700 505.200 Z" fill="#2d6ab0"/><path d="M21.500 488 l2 -2.200 l2.800 2.800 l-2.200 2 z M15.500 491 l3.500 -4 l1.500 1.500 l-3.500 4 z" fill="#2d6ab0"/>
 <circle cx="22.700" cy="499.500" r="3.200" fill="#fff" stroke="#8a4aa8" stroke-width="1.500"/><path d="M20.500 502 l-2 4.500 l2.500 -1 l1 1.500 z M24.900 502 l2 4.500 l-2.500 -1 l-1 1.500 z" fill="#8a4aa8"/>
 <!-- grip -->
 <path d="M39.500 378 V421 M41.500 378 V421" stroke="#8a8a8a" stroke-width="1" stroke-dasharray="1 1"/>
</svg>

<!-- scrollbar -->
<div class="a" style="left:1349px;top:176px;width:17px;height:522px;background:#f0f0f0"></div>
<div class="a" style="left:1350px;top:229px;width:15px;height:17px;background:#cdcdcd"></div>
<svg style="left:1349px;top:176px" width="17" height="522" viewBox="1349 176 17 522">
 <path d="M1352 180.5h11M1352 183.5h11" stroke="#000" stroke-width="1.2"/><path d="M1355 180l2.5-3 2.500 3zM1355 184l2.5 3 2.500-3z" fill="#000"/>
 <path d="M1353.500 198l4-4 4 4" stroke="#444" stroke-width="1.8" fill="none"/>
 <path d="M1353.500 687l4 4 4-4" stroke="#444" stroke-width="1.8" fill="none"/>
</svg>
<!-- bottom nav -->
<div class="a" style="left:0;top:698px;width:1366px;height:30px;background:#f0f0f0"></div>
<div class="a" style="left:597px;top:703px;width:116px;height:20px;background:#fff;border:1px solid #ababab;box-sizing:border-box"></div>
<div class="a" style="left:1050px;top:705px;width:24px;height:18px;background:#d6b9e4"></div>
<svg style="left:0;top:698px" width="1366" height="30" viewBox="0 698 1366 30">
 <!-- first / prev / next / last -->
 <path d="M559 707 V720 L552 713.500 Z" fill="#1a1a1a"/><path d="M564.300 707 V720 H562.300 L560.800 713.500 L562.300 707 Z" fill="#1a1a1a"/>
 <path d="M586.200 707 V720 L579 713.500 Z" fill="#1a1a1a"/>
 <path d="M721.800 707 V720 L729 713.500 Z" fill="#1a1a1a"/>
 <path d="M750.500 707 V720 L757.500 713.500 Z" fill="#1a1a1a"/><path d="M745 707 V720 H747 L748.500 713.500 L747 707 Z" fill="#1a1a1a"/>
 <path d="M702 711.500 h5.500 l-2.750 3.200 z" fill="#000"/>
 <!-- view history icons -->
 <g>
  <rect x="769.500" y="706.500" width="8" height="8" fill="#fff" stroke="#888" stroke-width="1"/><path d="M769.500 709 h8 M769.500 711.500 h8 M772 706.500 v8 M775 706.500 v8" stroke="#999" stroke-width="0.700"/><rect x="769" y="706" width="9" height="2" fill="#2d6ab0"/>
  <rect x="775.500" y="712.500" width="9" height="8" fill="#fff" stroke="#555" stroke-width="1"/><path d="M775.500 715 h9 M775.500 717.500 h9 M778.500 712.500 v8 M781.500 712.500 v8" stroke="#777" stroke-width="0.700"/><rect x="775" y="712" width="10" height="2" fill="#444"/>
  <path d="M785 709.500 h-5" stroke="#3d9a7a" stroke-width="1.600"/><path d="M781 706.500 v6 l-3.500 -3 z" fill="#3d9a7a"/>
  <g opacity="0.450">
  <rect x="795.500" y="706.500" width="8" height="8" fill="#fff" stroke="#888" stroke-width="1"/><path d="M795.500 709 h8 M795.500 711.500 h8 M798 706.500 v8 M801 706.500 v8" stroke="#999" stroke-width="0.700"/><rect x="795" y="706" width="9" height="2" fill="#888"/>
  <rect x="801.500" y="712.500" width="9" height="8" fill="#fff" stroke="#777" stroke-width="1"/><path d="M801.500 715 h9 M801.500 717.500 h9 M804.500 712.500 v8 M807.500 712.500 v8" stroke="#888" stroke-width="0.700"/><rect x="801" y="712" width="10" height="2" fill="#7a9acc"/>
  <path d="M796 716.500 h5" stroke="#3d9a7a" stroke-width="1.600"/><path d="M800 713.500 v6 l3.500 -3 z" fill="#3d9a7a"/>
  </g>
 </g>
 <!-- page layout icons -->
 <g stroke="#777" stroke-width="1" fill="#fff">
  <rect x="1030.500" y="707.500" width="10.500" height="13"/><path d="M1032.500 711 h6.500 M1032.500 714 h6.500 M1032.500 717 h6.500" stroke="#999"/>
  <path d="M1056.500 716 V706.500 H1067.500 V716 M1056.500 723 V718.500 H1067.500 V723" fill="#fff" stroke="#666"/><path d="M1058.500 712 h7 M1058.500 721 h7" stroke="#999"/>
  <rect x="1079.500" y="708.500" width="6" height="11"/><rect x="1087.500" y="708.500" width="6" height="11"/><path d="M1081 712 h3 M1081 715 h3 M1089 712 h3 M1089 715 h3" stroke="#999"/>
  <path d="M1104.500 714.500 H1110.500 V706 M1119.500 714.500 H1113.500 V706 M1104.500 717.500 H1110.500 V723 M1119.500 717.500 H1113.500 V723" fill="none" stroke="#666"/><path d="M1105 709 h4 M1105 711.500 h4 M1115 709 h4 M1115 711.500 h4 M1105 720.500 h4 M1115 720.500 h4" stroke="#999"/>
 </g>
 <path d="M1203.600 711.500 h5.400 l-2.700 3.200 z" fill="#000"/>
 <circle cx="1221.500" cy="713" r="7.200" fill="#fff" stroke="#222" stroke-width="1"/><path d="M1217.500 713 h8" stroke="#222" stroke-width="1.100"/>
 <circle cx="1340" cy="713" r="7.200" fill="#fff" stroke="#222" stroke-width="1"/><path d="M1336 713 h8 M1340 709 v8" stroke="#222" stroke-width="1.100"/>
 <path d="M1236 713.500 H1327" stroke="#333" stroke-width="1"/><path d="M1281.500 710.500 v6" stroke="#333" stroke-width="1"/>
 <rect x="1269" y="708.500" width="4.500" height="8.500" fill="#222"/>
</svg>

<!-- taskbar -->
<div class="a" style="left:0;top:728px;width:1366px;height:40px;background:linear-gradient(90deg,#35a4bd 0,#3fa5bf 8%,#4aa3c0 45%,#3f93b8 68%,#2d7ea7 80%,#256f99 100%)"></div>
<div class="a" style="left:0;top:728px;width:1362px;height:14.500px;background:linear-gradient(90deg,rgba(190,190,190,0.55) 0,rgba(205,210,210,0.50) 70%,rgba(190,200,205,0.58) 100%)"></div>
<div class="a" style="left:0;top:728px;width:1366px;height:1px;background:rgba(60,90,100,0.55)"></div>
<div class="a" style="left:60px;top:729px;width:131.5px;height:39px;box-sizing:border-box;background:rgba(255,255,255,0.13);border:1px solid rgba(255,255,255,0.32);border-bottom:none;box-shadow:-1px 0 0 rgba(30,80,100,0.45)"></div>
<div class="a" style="left:194px;top:729px;width:131.5px;height:39px;box-sizing:border-box;background:rgba(255,255,255,0.13);border:1px solid rgba(255,255,255,0.32);border-bottom:none;box-shadow:-1px 0 0 rgba(30,80,100,0.45)"></div>
<div class="a" style="left:328.4px;top:729px;width:131.5px;height:39px;box-sizing:border-box;background:rgba(255,255,255,0.13);border:1px solid rgba(255,255,255,0.32);border-bottom:none;box-shadow:-1px 0 0 rgba(30,80,100,0.45)"></div>
<div class="a" style="left:462.6px;top:729px;width:131.5px;height:39px;box-sizing:border-box;background:rgba(255,255,255,0.13);border:1px solid rgba(255,255,255,0.32);border-bottom:none;box-shadow:-1px 0 0 rgba(30,80,100,0.45)"></div>
<div class="a" style="left:596.8px;top:729px;width:131.5px;height:39px;box-sizing:border-box;background:rgba(255,255,255,0.13);border:1px solid rgba(255,255,255,0.32);border-bottom:none;box-shadow:-1px 0 0 rgba(30,80,100,0.45)"></div>
<div class="a" style="left:731px;top:729px;width:131.5px;height:39px;box-sizing:border-box;background:rgba(255,255,255,0.13);border:1px solid rgba(255,255,255,0.32);border-bottom:none;box-shadow:-1px 0 0 rgba(30,80,100,0.45)"></div>
<div class="a" style="left:865.5px;top:729px;width:131.5px;height:39px;box-sizing:border-box;background:linear-gradient(180deg,rgba(255,255,255,0.42) 0,rgba(255,255,255,0.34) 100%);border:1px solid rgba(255,255,255,0.75);border-bottom:none"></div>
<svg style="left:0;top:728px" width="1366" height="40" viewBox="0 728 1366 40">
<defs><linearGradient id="gw" x1="0" y1="0" x2="1" y2="1"><stop offset="0" stop-color="#ffffff"/><stop offset="1" stop-color="#c9d8f2"/></linearGradient>
<linearGradient id="gf" x1="0" y1="0" x2="1" y2="0"><stop offset="0" stop-color="#f6e69c"/><stop offset="0.55" stop-color="#f2dc84"/><stop offset="1" stop-color="#e2c258"/></linearGradient>
<linearGradient id="gf2" x1="0" y1="0" x2="0" y2="1"><stop offset="0" stop-color="#f7eaa6"/><stop offset="1" stop-color="#ecd377"/></linearGradient></defs>
<path d="M11 740.500 L24.500 738 V749.500 H11 Z M26.500 737.600 L41.300 735 V749.500 H26.500 Z M11 751.500 H24.500 V762.500 L11 760 Z M26.500 751.500 H41.300 V765.500 L26.500 763 Z" fill="#fff"/>
<g transform="translate(60 0)"><rect x="8.500" y="732.200" width="28.500" height="27.500" rx="1.500" fill="url(#gw)" stroke="#2b4f9e" stroke-width="1.200"/><path d="M25 747.500 l12.500 -3.500 l2 9.500 l-12.500 4 z" fill="#fff" stroke="#9ab0d8" stroke-width="0.800"/><text x="10.300" y="752.500" font-family="Liberation Sans, sans-serif" font-weight="700" font-size="21" fill="#1b44a8" stroke="#1b44a8" stroke-width="0.900" textLength="23" lengthAdjust="spacingAndGlyphs">W</text><path d="M11 756.500 q8 -2 14 1.500" stroke="#b8c8e8" stroke-width="1" fill="none"/></g>
<g transform="translate(194 0)"><rect x="8.500" y="732.200" width="28.500" height="27.500" rx="1.500" fill="url(#gw)" stroke="#2b4f9e" stroke-width="1.200"/><path d="M25 747.500 l12.500 -3.500 l2 9.500 l-12.500 4 z" fill="#fff" stroke="#9ab0d8" stroke-width="0.800"/><text x="10.300" y="752.500" font-family="Liberation Sans, sans-serif" font-weight="700" font-size="21" fill="#1b44a8" stroke="#1b44a8" stroke-width="0.900" textLength="23" lengthAdjust="spacingAndGlyphs">W</text><path d="M11 756.500 q8 -2 14 1.500" stroke="#b8c8e8" stroke-width="1" fill="none"/></g>
<g transform="translate(328.4 0)"><rect x="8.500" y="732.200" width="28.500" height="27.500" rx="1.500" fill="url(#gw)" stroke="#2b4f9e" stroke-width="1.200"/><path d="M25 747.500 l12.500 -3.500 l2 9.500 l-12.500 4 z" fill="#fff" stroke="#9ab0d8" stroke-width="0.800"/><text x="10.300" y="752.500" font-family="Liberation Sans, sans-serif" font-weight="700" font-size="21" fill="#1b44a8" stroke="#1b44a8" stroke-width="0.900" textLength="23" lengthAdjust="spacingAndGlyphs">W</text><path d="M11 756.500 q8 -2 14 1.500" stroke="#b8c8e8" stroke-width="1" fill="none"/></g>
<circle cx="486.1" cy="748.3" r="14.400" fill="#e03c31"/><path d="M486.1 748.3 L473.70000000000005 741.0 A14.400 14.400 0 0 0 487.6 762.5999999999999 L492.6 751.3 Z" fill="#2e9e4c"/><path d="M486.1 748.3 L500.0 744.8 A14.400 14.400 0 0 1 487.6 762.5999999999999 L492.6 751.3 Z" fill="#f7ca2e"/><path d="M473.70000000000005 741.0 A14.400 14.400 0 0 1 500.0 744.8 L486.1 744.8 Z" fill="#e03c31"/><circle cx="486.1" cy="748.3" r="6.600" fill="#fff"/><circle cx="486.1" cy="748.3" r="5.200" fill="#4a8af0"/>
<path d="M615.3 761.500 L632.3 759 L633.3 757 L616.3 759 Z" fill="#10303c" opacity="0.350"/><path d="M613.8 733.500 L627.8 735.700 L628.5 758.400 L614.5999999999999 761.300 Z" fill="url(#gf2)" stroke="#cdb050" stroke-width="0.600"/><path d="M607.5 734 L613.0999999999999 732.500 L616.0 738.600 L615.3 763.200 L608.4 760.600 Z" fill="url(#gf)" stroke="#c9aa48" stroke-width="0.600"/><rect x="627.0999999999999" y="752.500" width="1.500" height="5.800" fill="#fff" stroke="#a89040" stroke-width="0.400"/>
<path d="M749.5 761.500 L766.5 759 L767.5 757 L750.5 759 Z" fill="#10303c" opacity="0.350"/><path d="M748.0 733.500 L762.0 735.700 L762.7 758.400 L748.8 761.300 Z" fill="url(#gf2)" stroke="#cdb050" stroke-width="0.600"/><path d="M741.7 734 L747.3 732.500 L750.2 738.600 L749.5 763.200 L742.6 760.600 Z" fill="url(#gf)" stroke="#c9aa48" stroke-width="0.600"/><rect x="761.3" y="752.500" width="1.500" height="5.800" fill="#fff" stroke="#a89040" stroke-width="0.400"/>
<path d="M874.0 732 H900.0 L906.0 738 V764 H874.0 Z" fill="#6b2a72"/><path d="M900.0 732 V738 H906.0 Z" fill="#c9a8d0"/><path d="M898.0 740 Q888.0 735 883.0 742 Q879.0 750 886.0 754.500 Q893.0 757 897.0 751 L890.5 750 Q892.0 744 898.0 740 Z" fill="#fff"/><path d="M889.0 739 q6 -3 9 -1 q-3 1 -4 3 z" fill="#fff"/><text x="882.5" y="762.500" font-family="Liberation Sans, sans-serif" font-weight="700" font-size="7.500" fill="#fff" textLength="15" lengthAdjust="spacingAndGlyphs">PDF</text>
<g>
<circle cx="1015.500" cy="749" r="7.500" fill="#d8262c"/><path d="M1009.500 752 L1021.500 744.500 L1021.500 747 L1009.500 754.500 Z" fill="#fff" opacity="0.850"/><path d="M1010 746 q5 -4 10 -2" stroke="#f08088" stroke-width="1.200" fill="none"/>
<path d="M1031.500 746 h3 l4.500 -4.500 v15 l-4.500 -4.500 h-3 z" fill="#fff" stroke="#555" stroke-width="0.600"/><path d="M1040.500 745 q2.500 4 0 8 M1043 743 q4 6 0 12" stroke="#fff" stroke-width="1.500" fill="none"/>
<path d="M1063 741.500 L1071 756 H1055 Z" fill="#e23a2c" stroke="#b02018" stroke-width="0.700" stroke-linejoin="round"/><path d="M1063 746 v5.500" stroke="#fff" stroke-width="2"/><circle cx="1063" cy="753.800" r="1.100" fill="#fff"/>
<circle cx="1087" cy="749" r="8" fill="#fff"/><circle cx="1087" cy="744.800" r="2.700" fill="#e8382c"/><circle cx="1091" cy="747.800" r="2.700" fill="#e8382c"/><circle cx="1089.500" cy="752.500" r="2.700" fill="#e8382c"/><circle cx="1084.500" cy="752.500" r="2.700" fill="#e8382c"/><circle cx="1083" cy="747.800" r="2.700" fill="#e8382c"/><circle cx="1087" cy="749" r="2.400" fill="#f8c830"/>
<circle cx="1111" cy="749" r="5.200" fill="#2448a8"/><circle cx="1109.500" cy="747.300" r="2" fill="#6a8ae0"/><ellipse cx="1111" cy="749" rx="8.500" ry="2.100" fill="none" stroke="#1f3a8a" stroke-width="1.200" transform="rotate(-20 1111 749)"/>
<circle cx="1138" cy="745" r="6.500" fill="#3a6fd0" stroke="#1f3f90" stroke-width="0.700"/><path d="M1138 741 v5" stroke="#fff" stroke-width="1.800"/><circle cx="1138" cy="748.300" r="1" fill="#fff"/><rect x="1129" y="750" width="8" height="5" fill="#d8d8d8" stroke="#333" stroke-width="0.700"/><rect x="1128" y="755.500" width="10" height="2" fill="#222"/>
<path d="M1152 746 h3 l5 -5 v16 l-5 -5 h-3 z" fill="#e8543a" stroke="#8a2a18" stroke-width="0.600"/><path d="M1162 745 q2.500 4 0 8 M1164.500 743 q3.500 6 0 12" stroke="#9a3a28" stroke-width="1.200" fill="none"/>
<circle cx="1183.500" cy="749" r="8" fill="#3a7ad0"/><path d="M1183.500 749 L1176 752 A8 8 0 0 0 1189 755 Z" fill="#f0a020"/><path d="M1183.500 749 L1191 746 A8 8 0 0 1 1189 755 Z" fill="#4aa838"/><path d="M1183.500 749 L1180 742 A8 8 0 0 1 1191 746 Z" fill="#e03828"/><circle cx="1181.500" cy="746" r="2.500" fill="#fff" opacity="0.550"/>
<path d="M1201 742 v3 M1205 742 v3" stroke="#fff" stroke-width="1.400"/><path d="M1199.500 745 h7 v3 q0 2 -2.500 2.500 v6 h-2 v-6 q-2.500 -0.500 -2.500 -2.500 z" fill="#fff"/><rect x="1208.500" y="743.500" width="7.500" height="13" rx="1" fill="none" stroke="#fff" stroke-width="1.500"/><rect x="1210.500" y="741.500" width="3.500" height="2" fill="#fff"/><rect x="1210.500" y="746" width="3.500" height="8.500" fill="#fff"/>
<path d="M1223.500 755.500 v-2 M1227 755.500 v-4.500 M1230.500 755.500 v-7.500 M1234 755.500 v-10.500 M1237.500 755.500 v-13.500" stroke="#fff" stroke-width="2.200"/>
</g></svg>
<span class="t" style="left:546.03px;top:8px;font-size:12.5px;color:#333;transform:scaleX(0.975);">Математика 2-бөлім 1-сынып оқулық.pdf - Foxit PhantomPDF</span>
<span class="t" style="left:19.17px;top:34px;font-size:13.7px;color:#fff;transform:scaleX(0.828);">FILE</span>
<span class="t" style="left:75.07px;top:34px;font-size:13.7px;color:#000;transform:scaleX(0.927);">HOME</span>
<span class="t" style="left:139.00px;top:34px;font-size:13.7px;color:#333;transform:scaleX(0.817);">CONVERT</span>
<span class="t" style="left:222.16px;top:34px;font-size:13.7px;color:#333;transform:scaleX(0.844);">EDIT</span>
<span class="t" style="left:277.00px;top:34px;font-size:13.7px;color:#333;transform:scaleX(0.827);">COMMENT</span>
<span class="t" style="left:365.00px;top:34px;font-size:13.7px;color:#333;transform:scaleX(0.884);">VIEW</span>
<span class="t" style="left:421.13px;top:34px;font-size:13.7px;color:#333;transform:scaleX(0.874);">FORM</span>
<span class="t" style="left:482.17px;top:34px;font-size:13.7px;color:#333;transform:scaleX(0.830);">PROTECT</span>
<span class="t" style="left:565.00px;top:34px;font-size:13.7px;color:#333;transform:scaleX(0.829);">SHARE</span>
<span class="t" style="left:630.19px;top:34px;font-size:13.7px;color:#333;transform:scaleX(0.809);">HELP</span>
<span class="t" style="left:1141.11px;top:33px;font-size:12.6px;color:#777;transform:scaleX(0.894);">Find</span>
<span class="t" style="left:10.16px;top:95px;font-size:12.6px;color:#1e1e1e;transform:scaleX(0.938);">Hand</span>
<span class="t" style="left:51.20px;top:95px;font-size:12.6px;color:#1e1e1e;transform:scaleX(0.949);">Select</span>
<span class="t" style="left:56.60px;top:111px;font-size:12.6px;color:#1e1e1e;transform:scaleX(1.034);">Text</span>
<span class="t" style="left:108.00px;top:95px;font-size:12.6px;color:#1e1e1e;transform:scaleX(0.958);">Select</span>
<span class="t" style="left:94.60px;top:111px;font-size:12.6px;color:#1e1e1e;transform:scaleX(0.993);">Annotation</span>
<span class="t" style="left:112.00px;top:128px;font-size:12.6px;color:#555;transform:scaleX(0.825);">Tools</span>
<span class="t" style="left:184.20px;top:61px;font-size:12.6px;color:#1e1e1e;transform:scaleX(0.951);">SnapShot</span>
<span class="t" style="left:184.20px;top:83px;font-size:12.6px;color:#1e1e1e;transform:scaleX(0.892);">Clipboard</span>
<span class="t" style="left:183.56px;top:105px;font-size:12.6px;color:#1e1e1e;transform:scaleX(0.936);">Bookmark</span>
<span class="t" style="left:261.00px;top:95px;font-size:12.6px;color:#1e1e1e;transform:scaleX(0.994);">Actual</span>
<span class="t" style="left:267.00px;top:111px;font-size:12.6px;color:#1e1e1e;transform:scaleX(0.776);">Size</span>
<span class="t" style="left:323.36px;top:61px;font-size:12.6px;color:#1e1e1e;transform:scaleX(0.941);">Fit Page</span>
<span class="t" style="left:323.30px;top:83px;font-size:12.6px;color:#1e1e1e;transform:scaleX(1.005);">Fit Width</span>
<span class="t" style="left:323.38px;top:105px;font-size:12.6px;color:#1e1e1e;transform:scaleX(0.916);">Fit Visible</span>
<span class="t" style="left:411.20px;top:61px;font-size:12.6px;color:#1e1e1e;transform:scaleX(1.018);">79.76%</span>
<span class="t" style="left:402.58px;top:83px;font-size:12.6px;color:#1e1e1e;transform:scaleX(1.024);">Rotate Left</span>
<span class="t" style="left:402.62px;top:105px;font-size:12.6px;color:#1e1e1e;transform:scaleX(0.984);">Rotate Right</span>
<span class="t" style="left:371.00px;top:128px;font-size:12.6px;color:#555;transform:scaleX(0.751);">View</span>
<span class="t" style="left:525.60px;top:95px;font-size:12.6px;color:#1e1e1e;transform:scaleX(1.007);">Typewriter</span>
<span class="t" style="left:595.80px;top:95px;font-size:12.6px;color:#1e1e1e;transform:scaleX(1.000);">Note</span>
<span class="t" style="left:654.34px;top:61px;font-size:12.6px;color:#1e1e1e;transform:scaleX(0.957);">Highlight</span>
<span class="t" style="left:655.30px;top:83px;font-size:12.6px;color:#1e1e1e;transform:scaleX(0.992);">Strikeout</span>
<span class="t" style="left:655.30px;top:105px;font-size:12.6px;color:#1e1e1e;transform:scaleX(0.929);">Underline</span>
<span class="t" style="left:592.00px;top:128px;font-size:12.6px;color:#555;transform:scaleX(0.815);">Comment</span>
<span class="t" style="left:729.68px;top:95px;font-size:12.6px;color:#1e1e1e;transform:scaleX(0.817);">PDF</span>
<span class="t" style="left:725.60px;top:111px;font-size:12.6px;color:#1e1e1e;transform:scaleX(0.873);">Sign</span>
<span class="t" style="left:721.91px;top:128px;font-size:12.6px;color:#555;transform:scaleX(0.886);">Protect</span>
<span class="t" style="left:794.66px;top:61px;font-size:12.6px;color:#1e1e1e;transform:scaleX(0.943);">Purchase Now</span>
<span class="t" style="left:795.60px;top:83px;font-size:12.6px;color:#1e1e1e;transform:scaleX(0.969);">Activate</span>
<span class="t" style="left:794.59px;top:105px;font-size:12.6px;color:#1e1e1e;transform:scaleX(1.015);">Product Info</span>
<span class="t" style="left:791.00px;top:128px;font-size:12.6px;color:#fff;transform:scaleX(0.861);">Get Standard</span>
<span class="t" style="left:59.00px;top:161px;font-size:12.5px;color:#1e1e1e;transform:scaleX(1.003);">Start</span>
<span class="t" style="left:209.01px;top:161px;font-size:12.5px;color:#1e1e1e;transform:scaleX(0.991);">Математика 2-бөлім ...</span>
<span class="t" style="left:602.50px;top:708px;font-size:12.5px;color:#1e1e1e;transform:scaleX(1.071);">9 / 148</span>
<span class="t" style="left:1142.00px;top:708px;font-size:12.5px;color:#333;transform:scaleX(1.026);">79.76%</span>
<span class="t" style="left:104.08px;top:742px;font-size:12.6px;color:#fff;transform:scaleX(0.918);">Кальендарн...</span>
<span class="t" style="left:236.05px;top:742px;font-size:12.6px;color:#fff;transform:scaleX(0.946);">Математика ...</span>
<span class="t" style="left:370.05px;top:742px;font-size:12.6px;color:#fff;transform:scaleX(0.946);">Математика ...</span>
<span class="t" style="left:506.00px;top:742px;font-size:12.6px;color:#fff;transform:scaleX(0.924);">Социальная ...</span>
<span class="t" style="left:642.00px;top:742px;font-size:12.6px;color:#fff;transform:scaleX(0.974);">1-сынып пл...</span>
<span class="t" style="left:775.00px;top:742px;font-size:12.6px;color:#fff;transform:scaleX(0.961);">матем қосы...</span>
<span class="t" style="left:909.05px;top:742px;font-size:12.6px;color:#fff;transform:scaleX(0.946);">Математика ...</span>
<span class="t" style="left:1253.50px;top:743px;font-size:12.6px;color:#fff;transform:scaleX(0.996);">ҚАЗ</span>
<span class="t" style="left:1310.00px;top:735px;font-size:12.6px;color:#fff;transform:scaleX(0.877);">3:26</span>
<span class="t" style="left:1293.40px;top:752px;font-size:12.6px;color:#fff;transform:scaleX(0.858);">30.08.2016</span>
</body></html>
